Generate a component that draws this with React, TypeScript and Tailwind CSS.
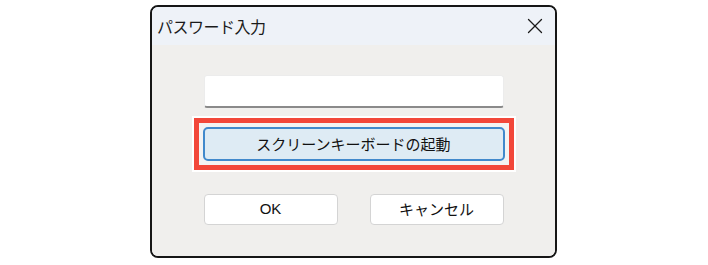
import React, { useState } from "react";
import { X } from "lucide-react";

const jp = "font-['Noto_Sans_CJK_JP','Noto_Sans',sans-serif]";

const App = () => {
  const [password, setPassword] = useState("");

  return (
    <div className="w-[708px] h-[265px] bg-white pt-[5px] pl-[150px]">
      <div className="w-[407px] h-[253px] rounded-[8px] border-2 border-[#161616] overflow-hidden flex flex-col">
        {/* Title bar */}
        <div className="h-[38px] bg-[#eef2f8] flex items-center justify-between pl-[5px] pr-[6px]">
          <span className={`${jp} text-[16px] text-[#1a1a1a] tracking-[-0.5px]`}>パスワード入力</span>
          <button aria-label="Close" className="w-[28px] h-[28px] flex items-center justify-center text-[#1a1a1a]">
            <X size={26} strokeWidth={1.2} />
          </button>
        </div>

        {/* Body */}
        <div className="flex-1 bg-[#f0efed] flex flex-col items-center pt-[30px]">
          <input
            type="password"
            value={password}
            onChange={(e) => setPassword(e.target.value)}
            className="w-[300px] h-[33px] bg-white rounded-[3px] border border-[#ececec] border-b-2 border-b-[#8a8a8a] outline-none px-2"
          />

          <div className="mt-[10px] w-[320px] h-[52px] border-[5px] border-[#f2473a] p-[4px] bg-[#f3f3f3] ring-2 ring-white">
            <button
              className={`${jp} w-full h-full rounded-[5px] border-2 border-[#4189cc] bg-[#deebf4] text-[15px] text-[#111] flex items-center justify-center`}
            >
              スクリーンキーボードの起動
            </button>
          </div>

          <div className="mt-[24px] flex gap-[32px]">
            <button className="w-[134px] h-[31px] bg-white rounded-[4px] border border-[#d4d4d4] font-['Liberation_Sans',sans-serif] text-[15px] text-[#111]">
              OK
            </button>
            <button className={`${jp} w-[134px] h-[31px] bg-white rounded-[4px] border border-[#d4d4d4] text-[15px] text-[#111]`}>
              キャンセル
            </button>
          </div>
        </div>
      </div>
    </div>
  );
};

export default App;
